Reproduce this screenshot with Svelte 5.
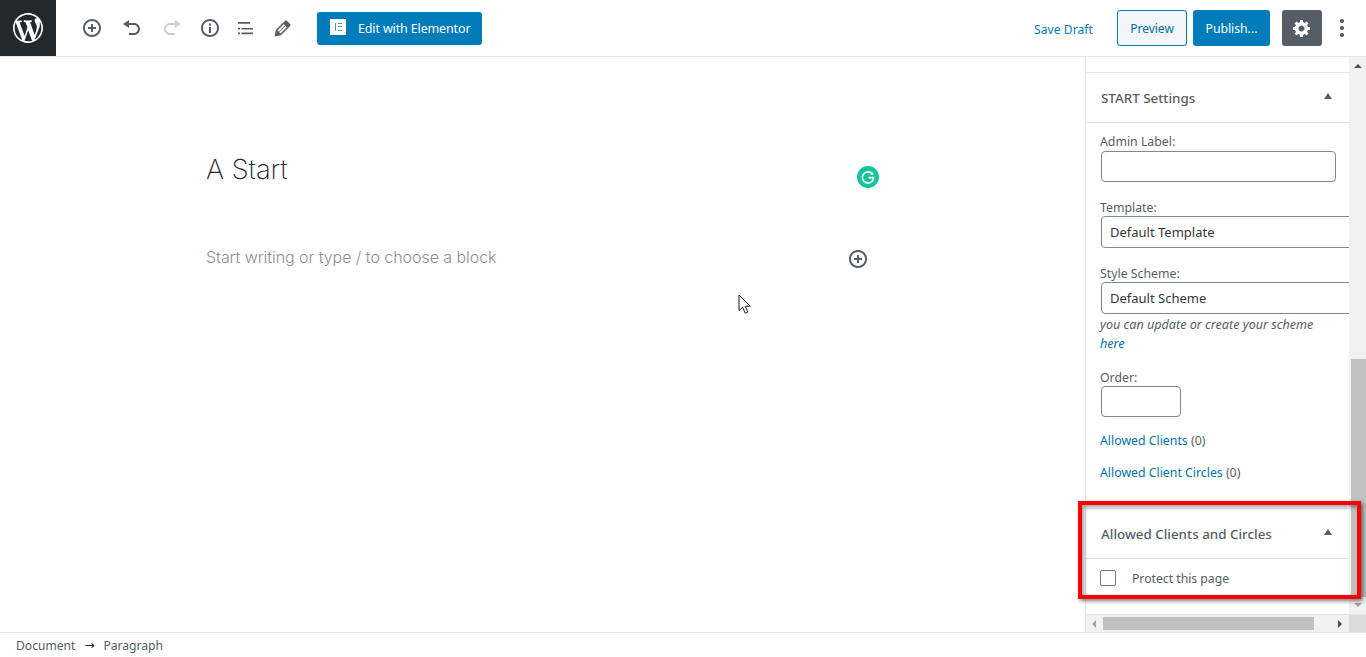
<script>
  const wp = "M20 10c0-5.51-4.49-10-10-10C4.48 0 0 4.49 0 10c0 5.52 4.48 10 10 10 5.51 0 10-4.48 10-10zM7.78 15.37L4.37 6.22c.55-.02 1.17-.08 1.17-.08.5-.06.44-1.13-.06-1.11 0 0-1.45.11-2.37.11-.18 0-.37 0-.58-.01C4.12 2.69 6.87 1.11 10 1.11c2.33 0 4.45.87 6.05 2.34-.68-.11-1.65.39-1.65 1.58 0 .74.45 1.36.9 2.1.35.61.55 1.36.55 2.46 0 1.49-1.4 5-1.4 5l-3.03-8.37c.54-.02.82-.17.82-.17.5-.05.44-1.25-.06-1.22 0 0-1.44.12-2.38.12-.87 0-2.33-.12-2.33-.12-.5-.03-.56 1.2-.06 1.22l.92.08 1.26 3.41zM17.41 10c.24-.64.74-1.87.43-4.25.7 1.29 1.05 2.71 1.05 4.25 0 3.29-1.73 6.24-4.4 7.78.97-2.59 1.94-5.2 2.92-7.78zM6.1 18.09C3.12 16.65 1.11 13.53 1.11 10c0-1.3.23-2.48.72-3.59C3.25 10.3 4.67 14.2 6.1 18.09zm4.03-6.63l2.58 6.98c-.86.29-1.76.45-2.71.45-.79 0-1.57-.11-2.29-.33.81-2.38 1.62-4.74 2.42-7.1z";
  const plus = "M10 1c-5 0-9 4-9 9s4 9 9 9 9-4 9-9-4-9-9-9zm0 16c-3.9 0-7-3.1-7-7s3.1-7 7-7 7 3.1 7 7-3.1 7-7 7zm1-11H9v3H6v2h3v3h2v-3h3V9h-3V6z";
  const undo = "M12 5H7V2L1 6l6 4V7h5c2.2 0 4 1.8 4 4s-1.8 4-4 4H7v2h5c3.3 0 6-2.7 6-6s-2.7-6-6-6z";
  const redo = "M8 5h5V2l6 4-6 4V7H8c-2.2 0-4 1.8-4 4s1.8 4 4 4h5v2H8c-3.3 0-6-2.7-6-6s2.7-6 6-6z";
  const info = "M10 1c-5 0-9 4-9 9s4 9 9 9 9-4 9-9-4-9-9-9zm0 16c-3.9 0-7-3.1-7-7s3.1-7 7-7 7 3.1 7 7-3.1 7-7 7zM9 5.5h2v2H9zM9 9h2v6H9z";
  const list = "M2 4h12v1.7H2zM5.5 10H17v1.5H5.5zM5.5 14.5H17v1.7H5.5zM2 14.5h2v1.7H2zM2 10h2v1.5H2z";
  const pencil = "M13.89 3.39l2.71 2.72c.46.46.42 1.24.03 1.64l-8.01 8.02-5.56 1.16 1.16-5.58s7.6-7.63 7.99-8.03c.39-.39 1.22-.39 1.68.07zm-2.73 2.79l-5.59 5.61 1.11 1.11 5.54-5.65zm-2.97 8.23l5.58-5.6-1.07-1.08-5.59 5.6z";
  const gear = "M18 12h-2.18c-.17.7-.44 1.35-.81 1.93l1.54 1.54-2.1 2.1-1.54-1.54c-.58.36-1.23.63-1.91.79V19H8v-2.18c-.68-.16-1.33-.43-1.91-.79l-1.54 1.54-2.12-2.12 1.54-1.54c-.36-.58-.63-1.23-.79-1.91H1V9.03h2.17c.16-.7.44-1.35.8-1.94L2.43 5.55l2.1-2.1 1.54 1.54c.58-.37 1.24-.64 1.93-.81V2h3v2.18c.68.16 1.33.43 1.91.79l1.54-1.54 2.12 2.12-1.54 1.54c.36.59.64 1.24.8 1.94H18V12zm-8.5 1.5c1.66 0 3-1.34 3-3s-1.34-3-3-3-3 1.34-3 3 1.34 3 3 3z";
  const tools = [
    { d: plus, c: "#555d66", s: 20 },
    { d: undo, c: "#555d66", s: 20 },
    { d: redo, c: "#ccd0d4", s: 20 },
    { d: info, c: "#555d66", s: 20 },
    { d: list, c: "#555d66", s: 20 },
    { d: pencil, c: "#555d66", s: 23 }
  ];
</script>

<div class="page">
  <header class="top">
    <div class="logo"><svg width="30" height="30" viewBox="0 0 20 20"><path d={wp} fill="#fff" /></svg></div>
    <div class="tools">
      {#each tools as t}
        <span class="tool"><svg width={t.s} height={t.s} viewBox="0 0 20 20"><path d={t.d} fill={t.c} /></svg></span>
      {/each}
    </div>
    <div class="elementor">
      <span class="elogo"><i></i><b></b><b></b><b></b></span>
      <span class="etext">Edit with Elementor</span>
    </div>
    <div class="spacer"></div>
    <span class="save">Save Draft</span>
    <span class="preview">Preview</span>
    <span class="publish">Publish...</span>
    <span class="gear"><svg width="20" height="20" viewBox="0 0 20 20"><path d={gear} fill="#fff" /></svg></span>
    <span class="more"><i></i><i></i><i></i></span>
  </header>

  <div class="middle">
    <main class="editor">
      <div class="column">
        <div class="title-row">
          <h1>A Start</h1>
          <span class="grammarly">
            <svg width="22" height="22" viewBox="0 0 22 22">
              <circle cx="11" cy="11" r="11" fill="#15c39a" />
              <path d="M15.6 8.2A5.6 5.6 0 1 0 16.6 11.6H11.6" fill="none" stroke="#fff" stroke-width="1.7" />
              <path d="M16.2 5.8V9H13z" fill="#fff" />
            </svg>
          </span>
        </div>
        <div class="para-row">
          <p>Start writing or type / to choose a block</p>
          <svg width="20" height="20" viewBox="0 0 20 20"><path d={plus} fill="#555d66" /></svg>
        </div>
      </div>
      <svg class="cursor" width="14" height="21" viewBox="0 0 14 21">
        <path d="M1 1v15.5l3.6-3.3 2.6 6 2.6-1.1-2.6-5.9h5z" fill="#fff" stroke="#1a1a1a" stroke-width="1" />
      </svg>
    </main>

    <aside class="side">
      <div class="view">
        <div class="scroll">
          <div class="stub"></div>
          <section>
            <div class="phead"><h2>START Settings</h2><span class="tri"></span></div>
            <div class="pbody">
              <label for="admin">Admin Label:</label>
              <input id="admin" class="short" type="text" />
              <label for="tpl" class="next">Template:</label>
              <div id="tpl" class="select">Default Template</div>
              <label for="sch" class="next">Style Scheme:</label>
              <div id="sch" class="select">Default Scheme</div>
              <p class="hint">you can update or create your scheme <a href="#here">here</a></p>
              <label for="ord" class="order">Order:</label>
              <input id="ord" class="tiny" type="text" />
              <div class="link first"><a href="#c">Allowed Clients</a> (0)</div>
              <div class="link"><a href="#cc">Allowed Client Circles</a> (0)</div>
            </div>
          </section>
          <section class="clients">
            <div class="phead"><h2>Allowed Clients and Circles</h2><span class="tri"></span></div>
            <div class="protect"><span class="check"></span><span class="ptext">Protect this page</span></div>
          </section>
        </div>
        <div class="vbar">
          <span class="arrow up"></span>
          <div class="vtrack"><div class="vthumb"></div></div>
          <span class="arrow down"></span>
        </div>
      </div>
      <div class="hbar">
        <span class="harrow left"></span>
        <div class="hthumb"></div>
        <span class="harrow right"></span>
        <span class="corner"></span>
      </div>
    </aside>
  </div>

  <footer class="crumbs"><span>Document</span><span class="sep">→</span><span>Paragraph</span></footer>

  <div class="redbox"></div>
</div>

<style>
  :global(body) { margin: 0; background: #fff; }
  .page {
    position: relative;
    height: 657px;
    width: 1366px;
    overflow: hidden;
    display: flex;
    flex-direction: column;
    font-family: "Noto Sans", "Open Sans", sans-serif;
    font-size: 13px;
    color: #555d66;
  }
  .top {
    height: 56px;
    flex: none;
    display: flex;
    align-items: center;
    border-bottom: 1px solid #e2e4e7;
    box-sizing: content-box;
  }
  .logo {
    width: 56px;
    height: 56px;
    background: #23282d;
    display: flex;
    align-items: center;
    justify-content: center;
  }
  .tools { display: flex; margin-left: 18px; }
  .tool { width: 36px; height: 36px; display: flex; align-items: center; justify-content: center; }
  .tool:nth-child(2), .tool:nth-child(3) { margin-left: 4px; }
  .tool:nth-child(4) { margin-left: 2px; }
  .elementor {
    margin-left: 17px;
    width: 165px;
    height: 33px;
    box-sizing: border-box;
    background: #007cba;
    border-radius: 3px;
    color: #fff;
    display: flex;
    align-items: center;
    padding-left: 13px;
    gap: 12px;
    white-space: nowrap;
  }
  .etext { font-size: 12.5px; letter-spacing: -0.14px; }
  .elogo {
    position: relative;
    width: 16px;
    height: 16px;
    background: #fff;
    display: block;
    margin-top: -2px;
  }
  .elogo i { position: absolute; left: 5px; top: 4px; width: 1px; height: 8px; background: #4a9bc9; }
  .elogo b { position: absolute; left: 8px; width: 4px; height: 1px; background: #4a9bc9; }
  .elogo b:nth-of-type(1) { top: 4px; }
  .elogo b:nth-of-type(2) { top: 7px; }
  .elogo b:nth-of-type(3) { top: 11px; }
  .spacer { flex: 1; }
  .save { color: #007cba; font-size: 12px; margin-right: 24px; margin-top: 2px; white-space: nowrap; letter-spacing: 0.1px; }
  .preview {
    width: 70px; height: 36px; box-sizing: border-box;
    border: 1px solid #007cba; border-radius: 3px; background: #f3f5f6; color: #0071a1;
    font-size: 12px; display: flex; align-items: center; justify-content: center;
  }
  .publish {
    margin-left: 6px; width: 77px; height: 36px;
    background: #007cba; border-radius: 3px; color: #fff; font-size: 12.2px;
    display: flex; align-items: center; justify-content: center;
  }
  .gear {
    margin-left: 12px; width: 40px; height: 36px; border-radius: 3px; background: #555d66;
    display: flex; align-items: center; justify-content: center;
  }
  .more { width: 40px; margin-right: 4px; display: flex; flex-direction: column; align-items: center; gap: 3.5px; }
  .more i { width: 3.5px; height: 3.5px; border-radius: 50%; background: #555d66; }

  .middle { flex: 1; min-height: 0; display: flex; }
  .editor { position: relative; flex: 1; min-width: 0; padding: 92px 0 0 206px; box-sizing: border-box; }
  .column { width: 673px; }
  .title-row { display: flex; justify-content: space-between; align-items: flex-start; height: 89px; }
  h1 {
    margin: 0;
    font: 200 27.5px/40px Inter, Roboto, sans-serif;
    letter-spacing: -0.15px;
    color: #23282d;
  }
  .grammarly { display: block; height: 22px; margin-top: 17px; }
  .para-row { display: flex; justify-content: space-between; align-items: center; padding-right: 11px; height: 40px; margin-top: 1px; }
  .para-row p {
    margin: -4px 0 0;
    font: 300 16px/24px Inter, Roboto, sans-serif;
    color: #8b8f94;
    letter-spacing: -0.05px;
  }
  .cursor { position: absolute; left: 738px; top: 237px; }

  .side {
    width: 281px;
    flex: none;
    box-sizing: border-box;
    border-left: 1px solid #e2e4e7;
    display: flex;
    flex-direction: column;
  }
  .view { flex: 1; min-height: 0; display: flex; }
  .scroll { flex: 1; min-width: 0; overflow: hidden; }
  .stub { height: 15px; border-bottom: 1px solid #e2e4e7; }
  .phead {
    height: 50px;
    box-sizing: border-box;
    padding: 0 15px;
    display: flex;
    align-items: center;
    justify-content: space-between;
    border-bottom: 1px solid #e2e4e7;
  }
  h2 { margin: 0; font-size: 13.4px; font-weight: 500; color: #555d66; white-space: nowrap; }
  .tri {
    width: 0; height: 0;
    border-left: 4.5px solid transparent; border-right: 4.5px solid transparent;
    border-bottom: 6px solid #555d66;
    margin-right: 2px; margin-top: -4px;
  }
  .pbody { padding: 10px 0 0 14px; height: 386px; box-sizing: border-box; border-bottom: 1px solid #e2e4e7; font-size: 12.3px; }
  label { display: block; font-size: 12.3px; line-height: 18px; color: #555d66; }
  label.next { margin-top: 18px; line-height: 16px; }
  label.order { margin-top: 17px; line-height: 16px; }
  input {
    display: block;
    box-sizing: border-box;
    border: 1px solid #7e8993;
    border-radius: 4px;
    background: #fff;
    margin: 0 0 0 1px;
    padding: 0;
  }
  .short { width: 235px; height: 31px; }
  .tiny { width: 80px; height: 31px; }
  .select {
    box-sizing: border-box;
    width: 300px;
    height: 32px;
    margin-left: 1px;
    border: 1px solid #7e8993;
    border-radius: 4px;
    padding-left: 8px;
    line-height: 30px;
    font-size: 13px;
    color: #32373c;
  }
  .hint { margin: 1px 0 0; font-style: italic; line-height: 19px; width: 225px; color: #555d66; font-size: 12.6px; }
  .link { line-height: 18px; margin-top: 14px; color: #555d66; }
  .link.first { margin-top: 15px; }
  a { color: #0073aa; text-decoration: none; }
  .protect { display: flex; align-items: center; height: 37px; padding-left: 14px; gap: 16px; font-size: 12.2px; }
  .ptext { margin-top: 2px; }
  .check { width: 16px; height: 16px; border: 1px solid #6c7781; border-radius: 2px; box-sizing: border-box; }

  .vbar { width: 17px; flex: none; background: #f1f1f1; display: flex; flex-direction: column; align-items: center; }
  .arrow { width: 0; height: 0; border-left: 4px solid transparent; border-right: 4px solid transparent; flex: none; }
  .arrow.up { border-bottom: 4px solid #505050; margin: 7px 0 6px; }
  .arrow.down { border-top: 4px solid #a3a3a3; margin: 6px 0 7px; }
  .vtrack { flex: 1; width: 100%; display: flex; flex-direction: column; justify-content: flex-end; align-items: flex-end; }
  .vthumb { height: 238px; width: 15px; background: #c1c1c1; }

  .hbar { height: 18px; flex: none; display: flex; align-items: center; background: #f1f1f1; border-top: 1px solid #e2e4e7; box-sizing: border-box; }
  .harrow { width: 0; height: 0; border-top: 4px solid transparent; border-bottom: 4px solid transparent; flex: none; }
  .harrow.left { border-right: 4px solid #a3a3a3; margin: 0 7px 0 6px; }
  .harrow.right { border-left: 4px solid #505050; margin-left: 24px; margin-right: 5px; }
  .hthumb { width: 211px; height: 13px; background: #c1c1c1; }
  .corner { width: 17px; height: 100%; background: #dcdcdc; margin-left: auto; }

  .crumbs {
    height: 25px;
    flex: none;
    box-sizing: border-box;
    border-top: 1px solid #e2e4e7;
    padding-left: 16px;
    display: flex;
    align-items: center;
    font-size: 12.1px;
    color: #555d66;
  }
  .sep { margin: 0 9px 0 9px; color: #191e23; font-family: "DejaVu Sans", sans-serif; font-size: 12px; }

  .redbox {
    position: absolute;
    left: 1078px;
    top: 501px;
    width: 283px;
    height: 98px;
    box-sizing: border-box;
    border: 4px solid #ff0000;
    box-shadow: 2px 2px 4px rgba(0,0,0,.5), inset 2px 2px 4px rgba(0,0,0,.4);
  }
</style>
